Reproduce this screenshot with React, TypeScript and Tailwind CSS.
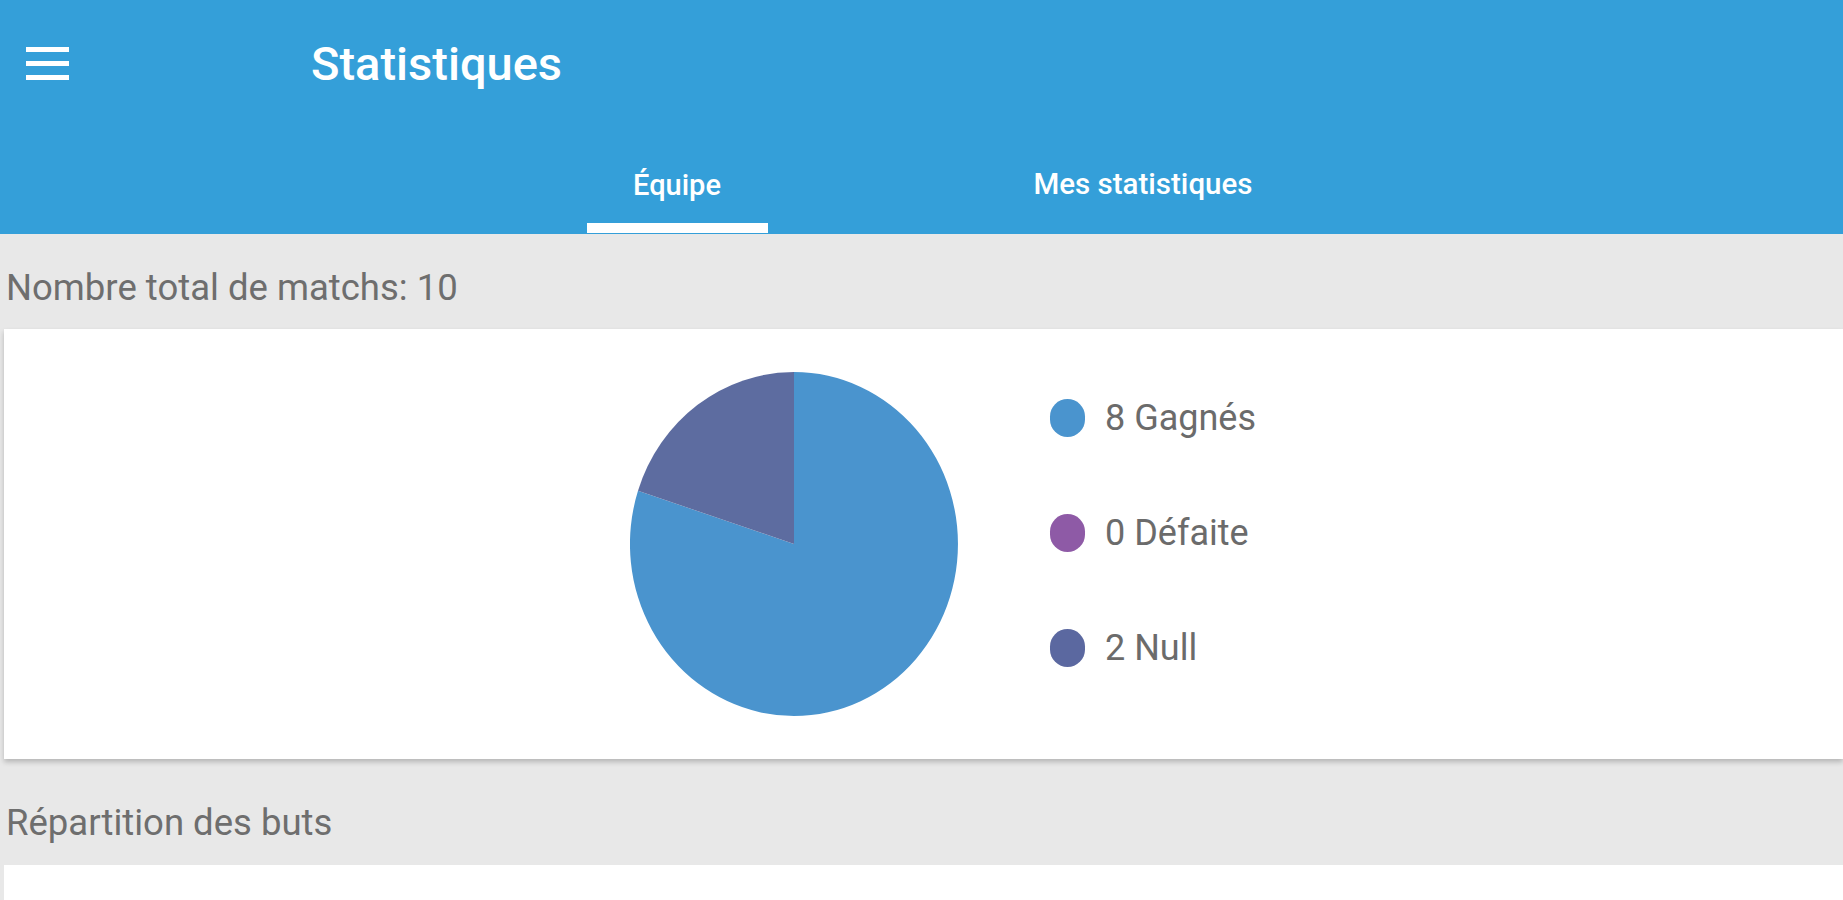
import React from "react";

const legend = [
  { color: "bg-[#4a94ce]", label: "8 Gagnés" },
  { color: "bg-[#8e5aa6]", label: "0 Défaite" },
  { color: "bg-[#5b68a0]", label: "2 Null" },
];

export default function App() {
  return (
    <div className="w-[1843px] h-[900px] overflow-hidden bg-[#e8e8e8] flex flex-col font-['Roboto','Liberation_Sans',sans-serif]">
      <header className="bg-[#349fd9] h-[234px] flex flex-col shrink-0">
        <div className="h-[126px] flex items-center pl-[26px]">
          <svg width="43" height="33" viewBox="0 0 43 33" className="shrink-0">
            <rect x="0" y="0" width="43" height="5" fill="#fff" />
            <rect x="0" y="14" width="43" height="5" fill="#fff" />
            <rect x="0" y="28" width="43" height="5" fill="#fff" />
          </svg>
          <h1 className="ml-[242px] text-white text-[47px] font-medium leading-none">Statistiques</h1>
        </div>
        <div className="h-[108px] flex pl-[444px]">
          <div className="w-[466px] flex flex-col items-center">
            <div className="h-[97px] pt-[21px] flex items-center justify-center text-white text-[29px] font-medium leading-none">Équipe</div>
            <div className="h-[10px] w-[181px] bg-white" />
          </div>
          <div className="w-[466px] flex flex-col items-center">
            <div className="h-[97px] pt-[21px] flex items-center justify-center text-white text-[29.5px] font-medium leading-none">Mes statistiques</div>
          </div>
        </div>
      </header>

      <div className="h-[95px] pt-[14px] pl-[6px] flex items-center text-[36.5px] text-[#6e6e6e] leading-none shrink-0">
        Nombre total de matchs: 10
      </div>

      <div className="ml-[4px] h-[430px] bg-white shadow-[0_3px_5px_rgba(0,0,0,0.22)] flex pl-[626px] pt-[43px] shrink-0">
        <svg width="328" height="344" viewBox="0 0 328 344" className="shrink-0">
          <path d="M164,172 L164,0 A164,172 0 1 1 8,118.8 Z" fill="#4a94ce" />
          <path d="M164,172 L8,118.8 A164,172 0 0 1 164,0 Z" fill="#5d6ca0" />
        </svg>
        <div className="ml-[92px] mt-[26px] flex flex-col gap-[75px]">
          {legend.map((l) => (
            <div key={l.label} className="h-[40px] flex items-center">
              <div className={`w-[35px] h-[38px] rounded-full ${l.color}`} />
              <span className="ml-[20px] text-[36px] text-[#6b6b6b] leading-none">{l.label}</span>
            </div>
          ))}
        </div>
      </div>

      <div className="h-[106px] pt-[23px] pl-[6px] flex items-center text-[36.5px] text-[#6e6e6e] leading-none shrink-0">
        Répartition des buts
      </div>

      <div className="ml-[4px] flex-1 bg-white" />
    </div>
  );
}
